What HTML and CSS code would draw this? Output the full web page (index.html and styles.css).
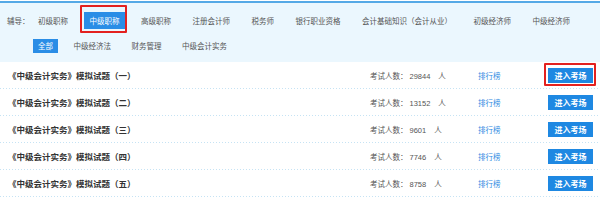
FILE: index.html
```html
<!DOCTYPE html>
<html lang="zh-CN">
<head>
<meta charset="utf-8">
<title>模拟考场</title>
<link rel="stylesheet" href="styles.css">
</head>
<body>
<div class="filter">
  <div class="filter-label">辅导：</div>
  <ul class="tabs tabs-primary">
    <li class="tab">初级职称</li>
    <li class="tab is-active marked">中级职称</li>
    <li class="tab">高级职称</li>
    <li class="tab">注册会计师</li>
    <li class="tab">税务师</li>
    <li class="tab">银行职业资格</li>
    <li class="tab">会计基础知识（会计从业）</li>
    <li class="tab">初级经济师</li>
    <li class="tab">中级经济师</li>
  </ul>
  <ul class="tabs tabs-secondary">
    <li class="tab is-active">全部</li>
    <li class="tab">中级经济法</li>
    <li class="tab">财务管理</li>
    <li class="tab">中级会计实务</li>
  </ul>
</div>
<ul class="exam-list">
  <li class="exam-row">
    <span class="exam-title">《中级会计实务》模拟试题（一）</span>
    <span class="exam-count">考试人数：<span class="num">29844</span>人</span>
    <a class="exam-rank">排行榜</a>
    <a class="exam-btn marked">进入考场</a>
  </li>
  <li class="exam-row">
    <span class="exam-title">《中级会计实务》模拟试题（二）</span>
    <span class="exam-count">考试人数：<span class="num">13152</span>人</span>
    <a class="exam-rank">排行榜</a>
    <a class="exam-btn">进入考场</a>
  </li>
  <li class="exam-row">
    <span class="exam-title">《中级会计实务》模拟试题（三）</span>
    <span class="exam-count">考试人数：<span class="num">9601</span>人</span>
    <a class="exam-rank">排行榜</a>
    <a class="exam-btn">进入考场</a>
  </li>
  <li class="exam-row">
    <span class="exam-title">《中级会计实务》模拟试题（四）</span>
    <span class="exam-count">考试人数：<span class="num">7746</span>人</span>
    <a class="exam-rank">排行榜</a>
    <a class="exam-btn">进入考场</a>
  </li>
  <li class="exam-row">
    <span class="exam-title">《中级会计实务》模拟试题（五）</span>
    <span class="exam-count">考试人数：<span class="num">8758</span>人</span>
    <a class="exam-rank">排行榜</a>
    <a class="exam-btn">进入考场</a>
  </li>
</ul>
</body>
</html>
```
FILE: styles.css
```css
* { box-sizing: border-box; }
html, body { margin: 0; padding: 0; background: #fff; }
body {
  font-family: "Noto Sans CJK SC", "Liberation Sans", sans-serif;
  font-size: 7.5px;
  color: #555;
  overflow: hidden;
}
ul { list-style: none; margin: 0; padding: 0; }

.filter {
  margin-top: 1px;
  border-top: 2px solid #55a9e6;
  background: #ebf7fe;
  padding: 9px 0 9px 7px;
  display: grid;
  grid-template-columns: 25px 1fr;
  row-gap: 10px;
}
.filter-label {
  height: 17px;
  line-height: 17px;
  color: #555;
}
.tabs { display: flex; align-items: center; }
.tabs-primary { gap: 9.5px; }
.tabs-secondary { grid-column: 2; gap: 10.5px; margin-left: 1px; }
.tab {
  position: relative;
  color: #555;
  white-space: nowrap;
}
.tabs-primary .tab { height: 17px; line-height: 17px; padding: 0 6px; }
.tabs-secondary .tab { height: 14px; line-height: 14px; padding: 0 5px; }
.tab.is-active { background: #2a8de6; color: #fff; }

.marked::after {
  content: "";
  position: absolute;
  border: 2px solid #e3211f;
  border-radius: 1px;
  pointer-events: none;
}
.tab.marked::after { left: -4px; right: -1px; top: -7px; bottom: -4px; }

.exam-row {
  display: flex;
  align-items: center;
  height: 27px;
  padding: 0 7px 1px 8px;
  background-image: linear-gradient(to right, #c6e3f4 1px, transparent 1px);
  background-size: 3px 1px;
  background-repeat: repeat-x;
  background-position: left bottom;
}
.exam-title {
  flex: 1;
  font-size: 8.5px;
  font-weight: bold;
  color: #333;
}
.exam-count { width: 108px; color: #555; white-space: nowrap; }
.exam-count .num {
  font-family: "Liberation Sans", sans-serif;
  margin: 0 8px 0 2px;
}
.exam-rank { width: 70px; color: #2f8be2; cursor: pointer; }
.exam-btn {
  position: relative;
  width: 45px;
  height: 15px;
  line-height: 15px;
  text-align: center;
  background: #1e88e2;
  color: #fff;
  font-size: 8px;
  font-weight: bold;
  cursor: pointer;
}
.exam-btn.marked::after { left: -4px; right: -3px; top: -5px; bottom: -3px; }
```
